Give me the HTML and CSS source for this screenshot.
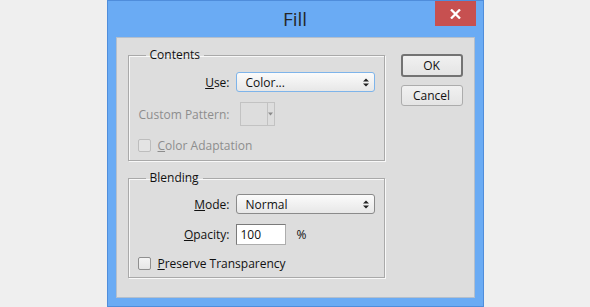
FILE: index.html
```html
<!DOCTYPE html>
<html>
<head>
    <title>Fill</title>
    <link rel="stylesheet" href="styles.css">
</head>
<body>
    <div class="window">
        <div class="titlebar">
            <span></span>
            <div class="title">Fill</div>
            <div class="close">
                <svg width="11" height="10" viewBox="0 0 11 10">
                    <path d="M1 0.5 L10 9.5 M10 0.5 L1 9.5" stroke="#fff" stroke-width="2.3" fill="none"/>
                </svg>
            </div>
        </div>
        <div class="client">
            <div class="groups">
                <fieldset class="group contents">
                    <legend>Contents</legend>
                    <div class="rows">
                        <label class="row-label"><u>U</u>se:</label>
                        <div class="select focused">
                            <span>Color...</span>
                            <svg width="6" height="9" viewBox="0 0 6 9"><path d="M0 3.5 L3 0.5 L6 3.5 Z M0 5.5 L6 5.5 L3 8.5 Z" fill="#222"/></svg>
                        </div>

                        <label class="row-label disabled">Custom Pattern:</label>
                        <div class="swatch">
                            <div class="swatch-box"></div>
                            <div class="swatch-arrow">
                                <svg width="5" height="4" viewBox="0 0 5 4"><path d="M0 0.5 L5 0.5 L2.5 3.5 Z" fill="#8a8a8a"/></svg>
                            </div>
                        </div>

                        <div class="check-row disabled">
                            <span class="checkbox"></span>
                            <span><u>C</u>olor Adaptation</span>
                        </div>
                    </div>
                </fieldset>

                <fieldset class="group blending">
                    <legend>Blending</legend>
                    <div class="rows">
                        <label class="row-label"><u>M</u>ode:</label>
                        <div class="select">
                            <span>Normal</span>
                            <svg width="6" height="9" viewBox="0 0 6 9"><path d="M0 3.5 L3 0.5 L6 3.5 Z M0 5.5 L6 5.5 L3 8.5 Z" fill="#222"/></svg>
                        </div>

                        <label class="row-label"><u>O</u>pacity:</label>
                        <div class="opacity">
                            <div class="text-input">100</div>
                            <span class="unit">%</span>
                        </div>

                        <div class="check-row">
                            <span class="checkbox"></span>
                            <span><u>P</u>reserve Transparency</span>
                        </div>
                    </div>
                </fieldset>
            </div>

            <div class="buttons">
                <button class="btn default">OK</button>
                <button class="btn">Cancel</button>
            </div>
        </div>
    </div>
</body>
</html>
```

FILE: styles.css
```css
body {
  margin: 0;
  padding: 0;
  background-color: #efefef;
  font-family: "Open Sans", "Noto Sans", sans-serif;
  font-size: 12px;
  color: #111111;
  display: flex;
  justify-content: center;
}

.window {
  width: 377px;
  height: 307px;
  box-sizing: border-box;
  background-color: #6aabf4;
  border: 1px solid #4f8ddb;
  display: flex;
  flex-direction: column;
}

.titlebar {
  height: 36px;
  display: grid;
  grid-template-columns: 1fr auto 1fr;
  align-items: start;
}

.title {
  font-size: 19px;
  line-height: 36px;
  color: #262626;
}

.close {
  justify-self: end;
  width: 41px;
  height: 25px;
  margin-right: 7px;
  background-color: #c75050;
  display: flex;
  align-items: center;
  justify-content: center;
}

.client {
  flex: 1;
  margin: 0 8px 8px 8px;
  background-color: #dddddd;
  border: 1px solid #b4bfcc;
  padding: 9px 0 0 11px;
  display: flex;
  align-items: flex-start;
}

.groups {
  width: 257px;
}

.group {
  margin: 0;
  padding: 0;
  min-width: 0;
  border: 1px solid #a9a9a9;
  box-shadow: inset 1px 1px 0 #f8f8f8, 1px 1px 0 #f8f8f8;
}

.group legend {
  margin-left: 17px;
  padding: 0 4px;
  line-height: 16px;
}

.blending {
  margin-top: 9px;
}

.rows {
  display: grid;
  grid-template-columns: 101px 148px;
  column-gap: 6px;
  align-items: center;
}

.contents .rows {
  grid-template-rows: 20px 24px 18px;
  row-gap: 10px;
  padding: 9px 0 6px 0;
}

.blending .rows {
  grid-template-rows: 20px 21px 16px;
  row-gap: 10px;
  padding: 8px 0 6px 0;
}

.row-label {
  text-align: right;
}

.disabled {
  color: #8d8d8d;
}

.select {
  width: 139px;
  height: 20px;
  box-sizing: border-box;
  border: 1px solid #8a8a8a;
  border-radius: 3px;
  background: linear-gradient(#fbfbfb, #e7e7e7);
  display: flex;
  align-items: center;
  justify-content: space-between;
  padding: 0 5px 0 9px;
}

.select.focused {
  border-color: #7eb4ea;
}

.swatch {
  margin-left: 4px;
  width: 35px;
  height: 24px;
  box-sizing: border-box;
  border: 1px solid #c2c2c2;
  display: flex;
}

.swatch-box {
  width: 26px;
  border-right: 1px solid #c2c2c2;
}

.swatch-arrow {
  flex: 1;
  display: flex;
  align-items: center;
  justify-content: center;
}

.check-row {
  grid-column: 1 / 3;
  padding-left: 9px;
  display: flex;
  align-items: center;
  gap: 7px;
}

.checkbox {
  width: 13px;
  height: 13px;
  box-sizing: border-box;
  border: 1px solid #8f8f8f;
  border-radius: 2px;
  background: linear-gradient(#f4f4f4, #e6e6e6);
}

.disabled .checkbox {
  border-color: #bdbdbd;
  background: #e4e4e4;
}

.opacity {
  display: flex;
  align-items: center;
}

.text-input {
  width: 50px;
  height: 21px;
  box-sizing: border-box;
  border: 1px solid #7a7a7a;
  border-color: #7a7a7a #adadad #adadad #7a7a7a;
  background-color: #ffffff;
  padding-left: 4px;
  line-height: 19px;
}

.unit {
  margin-left: 11px;
}

.buttons {
  margin-left: 16px;
  margin-top: 7px;
  display: flex;
  flex-direction: column;
  gap: 8px;
}

.btn {
  font-family: inherit;
  font-size: 12px;
  color: #111111;
  width: 62px;
  height: 21px;
  padding: 0;
  border: 1px solid #acacac;
  border-radius: 3px;
  background: linear-gradient(#f1f1f1, #e4e4e4);
}

.btn.default {
  height: 23px;
  border: 2px solid #737373;
}
```
